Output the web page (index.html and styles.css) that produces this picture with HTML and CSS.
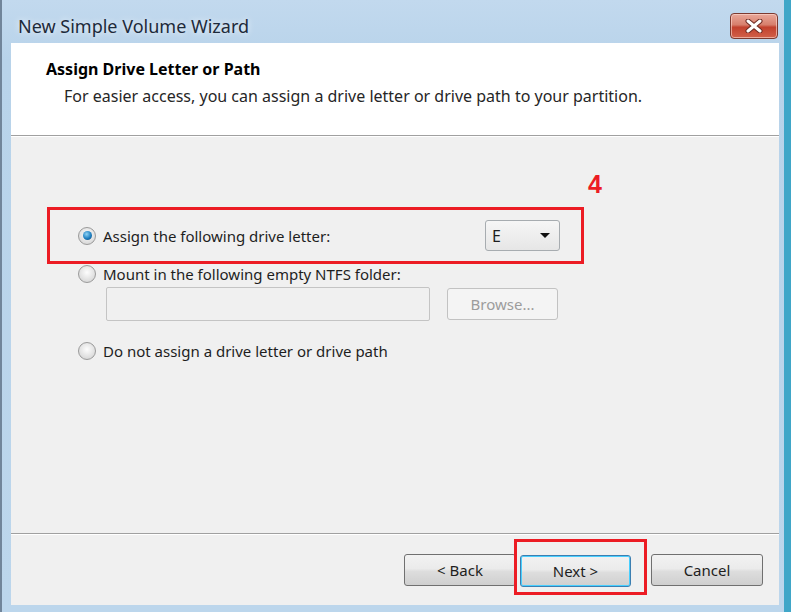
FILE: index.html
```html
<!DOCTYPE html>
<html lang="en">
<head>
  <meta charset="UTF-8" />
  <title>New Simple Volume Wizard</title>
  <link rel="stylesheet" href="styles.css">
</head>
<body>
  <div class="window">
    <div class="titlebar">
      <span class="title">New Simple Volume Wizard</span>
      <button class="close-btn" aria-label="Close">
        <svg width="20" height="14" viewBox="0 0 20 14">
          <path d="M4 2 L16 12 M16 2 L4 12" stroke="#6b2a22" stroke-width="5" stroke-linecap="round"/>
          <path d="M4 2 L16 12 M16 2 L4 12" stroke="#fff" stroke-width="3" stroke-linecap="round"/>
        </svg>
      </button>
    </div>

    <div class="client">
      <div class="header">
        <h1>Assign Drive Letter or Path</h1>
        <p>For easier access, you can assign a drive letter or drive path to your partition.</p>
      </div>

      <div class="content">
        <div class="step-num">4</div>

        <div class="highlight">
          <label class="option">
            <span class="radio checked"></span>
            <span>Assign the following drive letter:</span>
          </label>
          <div class="select">
            <span>E</span>
            <span class="arrow"></span>
          </div>
        </div>

        <label class="option">
          <span class="radio"></span>
          <span>Mount in the following empty NTFS folder:</span>
        </label>
        <div class="folder-row">
          <div class="textbox"></div>
          <button class="btn disabled">Browse...</button>
        </div>

        <label class="option last">
          <span class="radio"></span>
          <span>Do not assign a drive letter or drive path</span>
        </label>
      </div>

      <div class="footer">
        <button class="btn nav">&lt; Back</button>
        <div class="highlight next-wrap">
          <button class="btn nav default">Next &gt;</button>
        </div>
        <button class="btn nav">Cancel</button>
      </div>
    </div>
  </div>
</body>
</html>
```

FILE: styles.css
```css
* {
  box-sizing: border-box;
  margin: 0;
  padding: 0;
}

body {
  width: 791px;
  height: 612px;
  overflow: hidden;
  font-family: "Noto Sans", sans-serif;
  font-size: 15px;
  color: #1e1e1e;
}

.window {
  width: 791px;
  height: 612px;
  display: flex;
  flex-direction: column;
  background: linear-gradient(to bottom, #c2d9ee, #b8d3ea 60px, #bcd6ec);
  border-left: 2px solid #71859a;
  border-right: 7px solid #3fa6c8;
  padding: 0 5px 7px 9px;
}

/* title bar */
.titlebar {
  height: 43px;
  display: flex;
  align-items: flex-start;
  justify-content: space-between;
}

.title {
  margin: 15px 0 0 7px;
  font-size: 18px;
  line-height: 22px;
  color: #1d2a3a;
  text-shadow: 0 0 6px rgba(255, 255, 255, 0.9);
}

.close-btn {
  width: 48px;
  height: 26px;
  margin-top: 13px;
  margin-right: 1px;
  border: 1px solid #7c3a30;
  border-radius: 4px;
  background: linear-gradient(to bottom, #e9a89a, #d77f6c 45%, #c2412d 55%, #d2614a);
  box-shadow: inset 0 0 0 1px rgba(255, 220, 210, 0.6);
  display: flex;
  align-items: center;
  justify-content: center;
}

/* client area */
.client {
  flex: 1;
  display: flex;
  flex-direction: column;
  background: #f0f0f0;
}

.header {
  height: 93px;
  background: #fff;
  border-bottom: 1px solid #a0a0a0;
  box-shadow: 0 1px 0 #fff;
  padding: 16px 0 0 35px;
}

.header h1 {
  font-size: 16px;
  font-weight: bold;
  line-height: 21px;
  color: #000;
}

.header p {
  margin: 6px 0 0 18px;
  font-size: 16px;
  line-height: 21px;
  color: #262626;
}

.content {
  flex: 1;
  padding: 35px 0 0 36px;
}

.step-num {
  margin-left: 541px;
  font-size: 25px;
  font-weight: bold;
  line-height: 26px;
  color: #ec1c24;
  font-family: "Liberation Sans", sans-serif;
}

.highlight {
  border: 3px solid #ec1c24;
}

.content .highlight {
  width: 537px;
  height: 57px;
  margin-top: 10px;
  display: flex;
  align-items: center;
  justify-content: space-between;
  padding: 0 21px 0 28px;
}

.option {
  display: flex;
  align-items: center;
  gap: 7px;
  height: 20px;
}

.content > .option {
  margin: 0 0 0 31px;
}

.content > .option.last {
  margin-top: 20px;
}

.radio {
  width: 18px;
  height: 18px;
  border-radius: 50%;
  border: 1px solid #9a9a9a;
  background: radial-gradient(circle at 50% 40%, #fdfdfd, #dcdcdc 70%, #c8c8c8);
  display: flex;
  align-items: center;
  justify-content: center;
}

.radio.checked::after {
  content: "";
  width: 9px;
  height: 9px;
  border-radius: 50%;
  background: radial-gradient(circle at 40% 35%, #8fd3f5, #1e7fc0 55%, #0c3e6e);
}

.select {
  width: 75px;
  height: 31px;
  border: 1px solid #a7acb0;
  border-radius: 3px;
  background: linear-gradient(to bottom, #f6f6f6, #e6e6e6);
  display: flex;
  align-items: center;
  justify-content: space-between;
  padding: 0 9px 0 6px;
  font-size: 16px;
}

.arrow {
  width: 0;
  height: 0;
  border-left: 5px solid transparent;
  border-right: 5px solid transparent;
  border-top: 5px solid #111;
}

.folder-row {
  display: flex;
  align-items: center;
  gap: 17px;
  margin: 3px 0 0 59px;
}

.textbox {
  width: 324px;
  height: 34px;
  border: 1px solid #c4c4c4;
  border-radius: 2px;
  background: #f0f0f0;
}

.btn {
  font-family: inherit;
  font-size: 15px;
  color: #1e1e1e;
  height: 32px;
  border: 1px solid #707070;
  border-radius: 3px;
  background: linear-gradient(to bottom, #f2f2f2, #ebebeb 45%, #dddddd 55%, #cfcfcf);
}

.btn.disabled {
  width: 111px;
  color: #9c9c9c;
  border-color: #c2c2c2;
  background: #f4f4f4;
}

/* footer */
.footer {
  height: 72px;
  border-top: 1px solid #a0a0a0;
  box-shadow: inset 0 1px 0 #fff;
  display: flex;
  justify-content: flex-end;
  align-items: flex-start;
  padding: 5px 16px 0 0;
}

.btn.nav {
  width: 112px;
  margin-top: 15px;
}

.next-wrap {
  margin-left: -2px;
  margin-right: 4px;
  padding: 13px 13px 5px 3px;
}

.btn.nav.default {
  width: 111px;
  margin-top: 0;
  border-color: #3c7fb1;
  box-shadow: inset 0 0 0 1px #48cfff;
}
```
